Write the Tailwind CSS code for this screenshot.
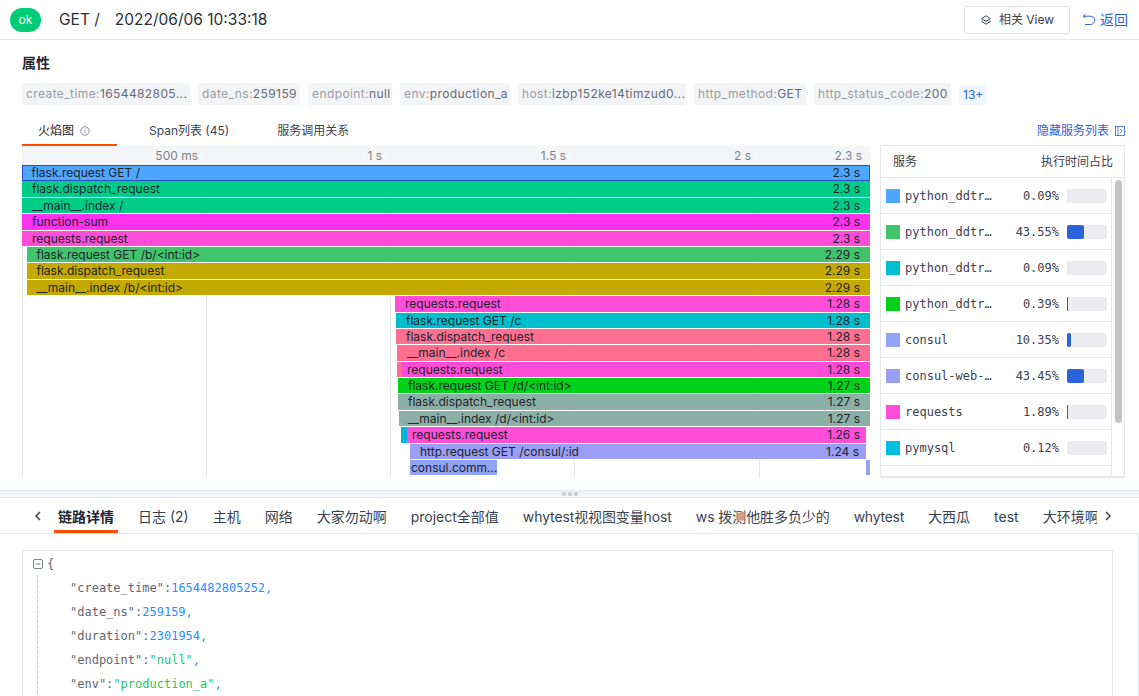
<!DOCTYPE html>
<html lang="en">
<head>
    <meta charset="UTF-8">
    <title>Trace Detail</title>
    <script src="https://cdn.jsdelivr.net/npm/@tailwindcss/browser@4"></script>
</head>
<body class="bg-white">
<div class="w-[1139px] h-[696px] overflow-hidden flex flex-col font-['Inter','Noto_Sans_CJK_SC',sans-serif] text-[#1f2733]">

    <!-- header -->
    <div class="h-[40px] shrink-0 border-b border-[#e6e7eb] flex items-center pl-[10px] pr-[11px]">
        <span class="w-[31px] h-[24px] rounded-full bg-[#00cc77] text-white text-[12px] flex items-center justify-center">ok</span>
        <span class="ml-[18px] text-[15.5px] text-[#2a2f38]">GET /</span>
        <span class="ml-[15px] text-[15.5px] text-[#2a2f38]">2022/06/06 10:33:18</span>
        <button class="ml-auto w-[106px] h-[28px] border border-[#dfe1e6] rounded-[2px] flex items-center justify-center gap-[7px] text-[12px] text-[#3b4250]">
            <svg width="12" height="12" viewBox="0 0 12 12" fill="none" stroke="#3b4250" stroke-width="1"><path d="M6 1.8 10.4 4.6 6 7.4 1.6 4.6Z"/><path d="M2.4 6.6 1.6 7.3 6 10.2 10.400 7.3 9.600 6.600"/></svg>
            相关 View
        </button>
        <span class="ml-[12px] flex items-center gap-[4px] text-[14px] text-[#2d62d9]">
            <svg width="14" height="14" viewBox="0 0 14 14" fill="none" stroke="#2d62d9" stroke-width="1"><path d="M3.5 1 1.2 3.2 3.5 5.2"/><path d="M1.5 3.2H8.5a3.9 3.9 0 0 1 0 8.3H3"/></svg>
            返回
        </span>
    </div>

    <!-- attributes -->
    <div class="h-[450px] shrink-0 relative">
        <div class="pl-[22px] pt-[14px] text-[14px] font-semibold leading-[18px]">属性</div>
        <div class="ml-[22px] mt-[11px] flex items-start gap-[8px] text-[12px] tracking-[.4px] leading-[22px] text-[#979ba3]">
            <span class="bg-[#f3f4f6] px-[4px] h-[22px] w-[168px] whitespace-nowrap">create_time:<b class="font-normal text-[#666b75]">1654482805...</b></span>
            <span class="bg-[#f3f4f6] px-[4px] h-[22px] w-[102px] whitespace-nowrap">date_ns:<b class="font-normal text-[#666b75]">259159</b></span>
            <span class="bg-[#f3f4f6] px-[4px] h-[22px] w-[84px] whitespace-nowrap">endpoint:<b class="font-normal text-[#666b75]">null</b></span>
            <span class="bg-[#f3f4f6] px-[4px] h-[22px] w-[110px] whitespace-nowrap">env:<b class="font-normal text-[#666b75]">production_a</b></span>
            <span class="bg-[#f3f4f6] px-[4px] h-[22px] w-[168px] whitespace-nowrap">host:<b class="font-normal text-[#666b75]">izbp152ke14timzud0...</b></span>
            <span class="bg-[#f3f4f6] px-[4px] h-[22px] w-[112px] whitespace-nowrap">http_method:<b class="font-normal text-[#666b75]">GET</b></span>
            <span class="bg-[#f3f4f6] px-[4px] h-[22px] w-[137px] whitespace-nowrap">http_status_code:<b class="font-normal text-[#666b75]">200</b></span>
            <span class="bg-[#eff6ff] text-[#2d62d9] mt-[2px] px-[4px] h-[20px] leading-[20px] tracking-normal">13+</span>
        </div>

        <!-- flame tabs -->
        <div class="ml-[22px] mt-[13px] mr-[11px] h-[28px] flex items-start text-[12px] text-[#3b4250] leading-[26px]">
            <div class="w-[95px] h-[28px] border-b-[2px] border-[#ff4d00] pl-[16px] flex items-start gap-[6px] text-[#1f2733]">
                <span>火焰图</span>
                <svg class="mt-[8px]" width="10" height="10" viewBox="0 0 10 10" fill="none" stroke="#6b7280" stroke-width="0.8"><circle cx="5" cy="5" r="4.2"/><path d="M5 4.4V7.4M5 2.6V3.4"/></svg>
            </div>
            <span class="ml-[32px]">Span列表 (45)</span>
            <span class="ml-[48px]">服务调用关系</span>
            <span class="ml-auto mr-[3px] flex items-center gap-[6px] text-[#2d62d9]">
                隐藏服务列表
                <svg width="10" height="10" viewBox="0 0 10 10" fill="none" stroke="#2d62d9" stroke-width="0.8"><rect x="0.5" y="0.5" width="9" height="9"/><path d="M3 .5V9.500M5 3 7 5 5 7"/></svg>
            </span>
        </div>

        <div class="flex ml-[22px] mr-[13px]">
            <!-- flame graph -->
            <div class="relative w-[848px] h-[332px] overflow-hidden text-[12px] leading-[16px] text-[#20242c]">
                <div class="absolute left-[184px] top-0 bottom-0 w-px bg-[#e6e7eb]"></div>
                <div class="absolute left-[368px] top-0 bottom-0 w-px bg-[#e6e7eb]"></div>
                <div class="absolute left-[552px] top-0 bottom-0 w-px bg-[#e6e7eb]"></div>
                <div class="absolute left-[737px] top-0 bottom-0 w-px bg-[#e6e7eb]"></div>
                <div class="absolute left-0 top-0 bottom-0 w-px bg-[#e6e7eb]"></div>

                <div class="relative h-[20px] bg-[#f3f4f6]/90 flex text-[#7d828c] text-right leading-[19px]">
                    <span class="w-[176px]">500 ms</span>
                    <span class="w-[184px]">1 s</span>
                    <span class="w-[184px]">1.5 s</span>
                    <span class="w-[185px]">2 s</span>
                    <span class="w-[111px]">2.3 s</span>
                </div>

                <div class="relative -mt-px flex flex-col">
                    <div class="h-[16.4px] flex"><div class="w-full h-[16px] bg-[#4da6ff] border-[1.5px] border-[#2b4fc4] flex justify-between pl-[8.500px] pr-[9px] leading-[13px]"><span>flask.request GET /</span><span>2.3 s</span></div></div>
                    <div class="h-[16.4px] flex"><div class="w-full h-[15.4px] bg-[#00cc88] flex justify-between pl-[10px] pr-[10px]"><span>flask.dispatch_request</span><span>2.3 s</span></div></div>
                    <div class="h-[16.4px] flex"><div class="w-full h-[15.4px] bg-[#00cc88] flex justify-between pl-[10px] pr-[10px]"><span>__main__.index /</span><span>2.3 s</span></div></div>
                    <div class="h-[16.4px] flex"><div class="w-full h-[15.4px] bg-[#ff33ee] flex justify-between pl-[10px] pr-[10px]"><span>function-sum</span><span>2.3 s</span></div></div>
                    <div class="h-[16.4px] flex"><div class="w-full h-[15.4px] bg-[#ff4dd8] flex justify-between pl-[10px] pr-[10px]"><span>requests.request</span><span>2.3 s</span></div></div>
                    <div class="h-[16.4px] flex pl-[4.500px]"><div class="w-full h-[15.4px] bg-[#40c46c] flex justify-between pl-[10px] pr-[10px]"><span>flask.request GET /b/&lt;int:id&gt;</span><span>2.29 s</span></div></div>
                    <div class="h-[16.4px] flex pl-[4.500px]"><div class="w-full h-[15.4px] bg-[#c4a900] flex justify-between pl-[10px] pr-[10px]"><span>flask.dispatch_request</span><span>2.29 s</span></div></div>
                    <div class="h-[16.4px] flex pl-[4.500px]"><div class="w-full h-[15.4px] bg-[#c4a900] flex justify-between pl-[10px] pr-[10px]"><span>__main__.index /b/&lt;int:id&gt;</span><span>2.29 s</span></div></div>
                    <div class="h-[16.4px] flex pl-[373px]"><div class="w-full h-[15.4px] bg-[#ff4dd8] flex justify-between pl-[10px] pr-[10px]"><span>requests.request</span><span>1.28 s</span></div></div>
                    <div class="h-[16.4px] flex pl-[374px]"><div class="w-full h-[15.4px] bg-[#00bfcc] flex justify-between pl-[10px] pr-[10px]"><span>flask.request GET /c</span><span>1.28 s</span></div></div>
                    <div class="h-[16.4px] flex pl-[374px]"><div class="w-full h-[15.4px] bg-[#ff6f91] flex justify-between pl-[10px] pr-[10px]"><span>flask.dispatch_request</span><span>1.28 s</span></div></div>
                    <div class="h-[16.4px] flex pl-[375px]"><div class="w-full h-[15.4px] bg-[#ff6f91] flex justify-between pl-[10px] pr-[10px]"><span>__main__.index /c</span><span>1.28 s</span></div></div>
                    <div class="h-[16.4px] flex pl-[375px]"><div class="w-[5px] h-[15.4px] bg-[#ff6f91]"></div><div class="flex-1 h-[15.4px] bg-[#ff4dd8] flex justify-between pl-[5px] pr-[10px]"><span>requests.request</span><span>1.28 s</span></div></div>
                    <div class="h-[16.4px] flex pl-[376px]"><div class="w-full h-[15.4px] bg-[#00d21a] flex justify-between pl-[10px] pr-[10px]"><span>flask.request GET /d/&lt;int:id&gt;</span><span>1.27 s</span></div></div>
                    <div class="h-[16.4px] flex pl-[376px]"><div class="w-full h-[15.4px] bg-[#8db0a6] flex justify-between pl-[10px] pr-[10px]"><span>flask.dispatch_request</span><span>1.27 s</span></div></div>
                    <div class="h-[16.4px] flex pl-[377px]"><div class="w-full h-[15.4px] bg-[#8db0a6] flex justify-between pl-[9px] pr-[10px]"><span>__main__.index /d/&lt;int:id&gt;</span><span>1.27 s</span></div></div>
                    <div class="h-[16.4px] flex pl-[379px] pr-[4px]"><div class="w-[6px] h-[15.4px] bg-[#00b8d9]"></div><div class="flex-1 h-[15.4px] bg-[#ff4dd8] flex justify-between pl-[5px] pr-[6px]"><span>requests.request</span><span>1.26 s</span></div></div>
                    <div class="h-[16.4px] flex pl-[388px] pr-[4px]"><div class="w-full h-[15.4px] bg-[#9b9ef5] flex justify-between pl-[10px] pr-[7px]"><span>http.request GET /consul/:id</span><span>1.24 s</span></div></div>
                    <div class="h-[16.4px] flex pl-[388px]"><div class="w-[87px] h-[15.4px] bg-[#91a3f5] pl-[1px]">consul.comm...</div><div class="ml-auto w-[4px] h-[15.4px] bg-[#91a3f5]"></div></div>
                </div>
            </div>

            <!-- service list -->
            <div class="ml-[10px] w-[245px] h-[333px] -mt-px border border-[#e6e7eb] border-b-[2px] relative overflow-hidden">
                <div class="h-[32px] border-b border-[#e6e7eb] flex justify-between items-center pl-[12px] pr-[11px] text-[12px] text-[#3b4250]">
                    <span>服务</span><span>执行时间占比</span>
                </div>
                <div class="w-[231px] border-r border-[#e6e7eb] h-[300px] font-['DejaVu_Sans_Mono',monospace] text-[12px] text-[#3b4250]">
                    <div class="h-[36px] border-b border-[#e6e7eb] flex items-center pl-[5px]"><i class="w-[14px] h-[14px] bg-[#4da6ff]"></i><span class="ml-[5px] w-[87px]">python_ddtr…</span><span class="w-[67px] text-right">0.09%</span><span class="ml-[8px] w-[40px] h-[14px] rounded-[2px] bg-[#ebebf0]"></span></div>
                    <div class="h-[36px] border-b border-[#e6e7eb] flex items-center pl-[5px]"><i class="w-[14px] h-[14px] bg-[#40c46c]"></i><span class="ml-[5px] w-[87px]">python_ddtr…</span><span class="w-[67px] text-right">43.55%</span><span class="ml-[8px] w-[40px] h-[14px] rounded-[2px] bg-[#ebebf0]"><span class="block w-[17px] h-full rounded-[2px] bg-[#2a62d9]"></span></span></div>
                    <div class="h-[36px] border-b border-[#e6e7eb] flex items-center pl-[5px]"><i class="w-[14px] h-[14px] bg-[#00bfcc]"></i><span class="ml-[5px] w-[87px]">python_ddtr…</span><span class="w-[67px] text-right">0.09%</span><span class="ml-[8px] w-[40px] h-[14px] rounded-[2px] bg-[#ebebf0]"></span></div>
                    <div class="h-[36px] border-b border-[#e6e7eb] flex items-center pl-[5px]"><i class="w-[14px] h-[14px] bg-[#00d21a]"></i><span class="ml-[5px] w-[87px]">python_ddtr…</span><span class="w-[67px] text-right">0.39%</span><span class="ml-[8px] w-[40px] h-[14px] rounded-[2px] bg-[#ebebf0]"><span class="block w-px h-full bg-[#2a62d9]"></span></span></div>
                    <div class="h-[36px] border-b border-[#e6e7eb] flex items-center pl-[5px]"><i class="w-[14px] h-[14px] bg-[#91a3f5]"></i><span class="ml-[5px] w-[87px]">consul</span><span class="w-[67px] text-right">10.35%</span><span class="ml-[8px] w-[40px] h-[14px] rounded-[2px] bg-[#ebebf0]"><span class="block w-[4px] h-full rounded-[2px] bg-[#2a62d9]"></span></span></div>
                    <div class="h-[36px] border-b border-[#e6e7eb] flex items-center pl-[5px]"><i class="w-[14px] h-[14px] bg-[#9b9ef5]"></i><span class="ml-[5px] w-[87px]">consul-web-…</span><span class="w-[67px] text-right">43.45%</span><span class="ml-[8px] w-[40px] h-[14px] rounded-[2px] bg-[#ebebf0]"><span class="block w-[17px] h-full rounded-[2px] bg-[#2a62d9]"></span></span></div>
                    <div class="h-[36px] border-b border-[#e6e7eb] flex items-center pl-[5px]"><i class="w-[14px] h-[14px] bg-[#ff4dd8]"></i><span class="ml-[5px] w-[87px]">requests</span><span class="w-[67px] text-right">1.89%</span><span class="ml-[8px] w-[40px] h-[14px] rounded-[2px] bg-[#ebebf0]"><span class="block w-px h-full bg-[#2a62d9]"></span></span></div>
                    <div class="h-[36px] border-b border-[#e6e7eb] flex items-center pl-[5px]"><i class="w-[14px] h-[14px] bg-[#00bfe0]"></i><span class="ml-[5px] w-[87px]">pymysql</span><span class="w-[67px] text-right">0.12%</span><span class="ml-[8px] w-[40px] h-[14px] rounded-[2px] bg-[#ebebf0]"></span></div>
                    <div class="h-[36px] flex pt-[11px] pl-[5px]"><i class="w-[14px] h-[14px] bg-[#ff6f91]"></i><span class="ml-[167px] w-[40px] h-[14px] rounded-[2px] bg-[#ebebf0]"></span></div>
                </div>
                <div class="absolute right-[2px] top-[34px] w-[7px] h-[243px] rounded-full bg-[#c4c4c4]"></div>
            </div>
        </div>
    </div>

    <!-- splitter -->
    <div class="h-[8px] shrink-0 bg-[#f1f2f5] border-y border-[#e6e7eb] flex items-center justify-center gap-[2px]">
        <i class="w-[4px] h-[4px] rounded-full bg-[#c8cad0]"></i><i class="w-[4px] h-[4px] rounded-full bg-[#c8cad0]"></i><i class="w-[4px] h-[4px] rounded-full bg-[#c8cad0]"></i>
    </div>

    <!-- bottom tabs -->
    <div class="h-[36px] shrink-0 border-b border-[#e6e7eb] flex items-start text-[14px] leading-[37px] text-[#3b4250] pl-[34px] pr-[24px]">
        <svg class="mt-[13px] shrink-0" width="8" height="10" viewBox="0 0 8 10" fill="none" stroke="#3b4250" stroke-width="1.500"><path d="M6 1 2 5 6 9"/></svg>
        <div class="ml-[12px] w-[1043px] overflow-hidden flex items-start whitespace-nowrap">
            <span class="w-[64px] h-[35px] shrink-0 border-b-[3px] border-[#ff4d00] text-center font-semibold text-[#1f2733]">链路详情</span>
            <span class="ml-[20px] shrink-0">日志 (2)</span>
            <span class="ml-[24px] shrink-0">主机</span>
            <span class="ml-[24px] shrink-0">网络</span>
            <span class="ml-[24px] shrink-0">大家勿动啊</span>
            <span class="ml-[24px] shrink-0">project全部值</span>
            <span class="ml-[24px] shrink-0 tracking-[-0.12px]">whytest视视图变量host</span>
            <span class="ml-[24px] shrink-0 tracking-[-0.08px]">ws 拨测他胜多负少的</span>
            <span class="ml-[24px] shrink-0 tracking-[-0.25px]">whytest</span>
            <span class="ml-[24px] shrink-0">大西瓜</span>
            <span class="ml-[24px] shrink-0">test</span>
            <span class="ml-[24px] shrink-0">大环境啊</span>
        </div>
        <svg class="mt-[13px] ml-[7px] shrink-0" width="8" height="10" viewBox="0 0 8 10" fill="none" stroke="#3b4250" stroke-width="1.500"><path d="M2 1 6 5 2 9"/></svg>
    </div>

    <!-- json -->
    <div class="flex-1 relative pt-[16px] pl-[22px] border-r border-[#e6e7eb]">
        <div class="w-[1091px] h-[160px] border border-[#e6e7eb] pl-[10px] pt-[1px] font-['DejaVu_Sans_Mono',monospace] text-[12px] leading-[24px] text-[#5f6570] relative">
            <div class="flex items-center">
                <svg width="10" height="10" viewBox="0 0 10 10" fill="none" stroke="#7d828c" stroke-width="1"><rect x=".5" y=".5" width="9" height="9" rx="1.500"/><path d="M2.500 5H7.500"/></svg>
                <span class="ml-[4px]">{</span>
            </div>
            <div class="absolute left-[14px] top-[24px] bottom-0 border-l border-dashed border-[#c4c6cc]"></div>
            <div class="pl-[37px]">"create_time":<span class="text-[#2b8cff]">1654482805252,</span></div>
            <div class="pl-[37px]">"date_ns":<span class="text-[#2b8cff]">259159,</span></div>
            <div class="pl-[37px]">"duration":<span class="text-[#2b8cff]">2301954,</span></div>
            <div class="pl-[37px]">"endpoint":<span class="text-[#1fc45f]">"null"</span><span class="text-[#2b8cff]">,</span></div>
            <div class="pl-[37px]">"env":<span class="text-[#1fc45f]">"production_a"</span><span class="text-[#2b8cff]">,</span></div>
        </div>
    </div>
</div>
</body>
</html>
